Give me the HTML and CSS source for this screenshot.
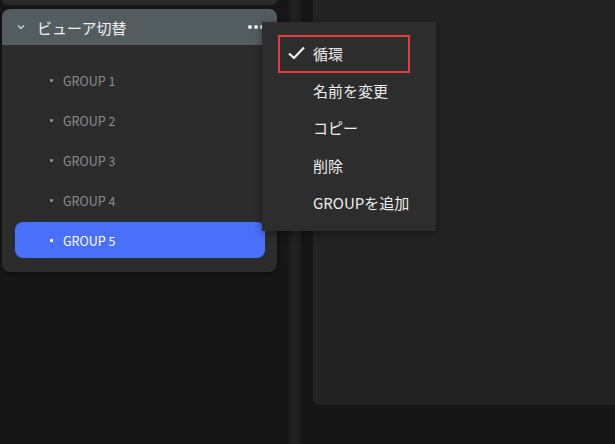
FILE: index.html
```html
<!DOCTYPE html>
<html>
<head>
    <title>Viewer</title>
    <link rel="stylesheet" href="styles.css">
</head>
<body>

<div class="app">
    <div class="sidebar">
        <div class="prev-card"></div>
        <div class="card">
            <div class="card-head">
                <svg class="chevron" width="10" height="10" viewBox="0 0 10 10">
                    <path d="M2 3.5 L5 6.5 L8 3.5" fill="none" stroke="#d8dcdd" stroke-width="1.2"/>
                </svg>
                <span class="card-title">ビューア切替</span>
                <span class="more">
                    <i></i><i></i><i></i>
                </span>
            </div>
            <ul class="group-list">
                <li class="group-item">GROUP 1</li>
                <li class="group-item">GROUP 2</li>
                <li class="group-item">GROUP 3</li>
                <li class="group-item">GROUP 4</li>
                <li class="group-item active">GROUP 5</li>
            </ul>
        </div>
    </div>
    <div class="strip"></div>
    <div class="main"></div>
</div>

<!-- context menu opened from the ••• button -->
<div class="menu">
    <div class="menu-item checked">
        <svg class="check" width="20" height="16" viewBox="0 0 20 16">
            <path d="M2 8.5 L7 13 L17 2.5" fill="none" stroke="#f2f2f2" stroke-width="2.2"/>
        </svg>
        循環
    </div>
    <div class="menu-item">名前を変更</div>
    <div class="menu-item">コピー</div>
    <div class="menu-item">削除</div>
    <div class="menu-item">GROUPを追加</div>
</div>

</body>
</html>
```

FILE: styles.css
```css
body {
    margin: 0;
    background-color: #161616;
    font-family: "Noto Sans CJK JP", "Noto Sans", sans-serif;
    overflow: hidden;
}

.app {
    display: flex;
    height: 444px;
}

/* Left side */
.sidebar {
    width: 275px;
    padding-left: 2px;
    margin-right: 12px;
}

.prev-card {
    height: 5px;
    background-color: #2a2a2a;
    border-radius: 0 0 8px 8px;
}

.card {
    margin-top: 4px;
    background-color: #2c2c2c;
    border-radius: 8px;
    overflow: hidden;
    box-shadow: 0 2px 4px rgba(0, 0, 0, 0.4);
}

.card-head {
    height: 36px;
    background-color: #535d60;
    display: flex;
    align-items: center;
    padding-left: 14px;
    padding-right: 13px;
}

.chevron {
    margin-right: 11px;
}

.card-title {
    color: #f0f2f2;
    font-size: 15px;
    flex: 1;
}

.more {
    display: flex;
    gap: 2px;
}

.more i {
    width: 4px;
    height: 4px;
    border-radius: 50%;
    background-color: #f2f2f2;
}

.group-list {
    list-style: none;
    margin: 0;
    padding: 17px 12px 10px 13px;
}

.group-item {
    height: 36px;
    margin-bottom: 4px;
    border-radius: 8px;
    display: flex;
    align-items: center;
    padding-left: 48px;
    position: relative;
    color: #8c8c8c;
    font-size: 12.5px;
}

.group-item::before {
    content: "";
    position: absolute;
    left: 35px;
    top: 17px;
    width: 3px;
    height: 3px;
    border-radius: 1px;
    background-color: #8c8c8c;
}

.group-item.active {
    background-color: #4a6ff8;
    color: #ffffff;
}

.group-item.active::before {
    background-color: #ffffff;
}

/* Middle strip and main area */
.strip {
    width: 12px;
    background: linear-gradient(to right, #1c1c1c, #222222 50%, #1c1c1c);
    margin-right: 12px;
}

.main {
    flex: 1;
    height: 405px;
    background-color: #232323;
    border-radius: 0 0 0 6px;
}

/* Context menu */
.menu {
    position: absolute;
    left: 262px;
    top: 22px;
    width: 174px;
    height: 209px;
    background-color: #2d2d2d;
    box-sizing: border-box;
    padding: 13px 0 0 16px;
    box-shadow: 0 2px 8px rgba(0, 0, 0, 0.4);
}

.menu-item {
    height: 37.5px;
    width: 132px;
    box-sizing: border-box;
    padding-left: 35px;
    padding-bottom: 3px;
    display: flex;
    align-items: center;
    color: #eeeeee;
    font-size: 15px;
    white-space: nowrap;
    position: relative;
}

.menu-item.checked {
    height: 38px;
    border: 2px solid #e23c3c;
    padding-left: 33px;
    padding-bottom: 1px;
}

.check {
    position: absolute;
    left: 7px;
    top: 8px;
}
```
